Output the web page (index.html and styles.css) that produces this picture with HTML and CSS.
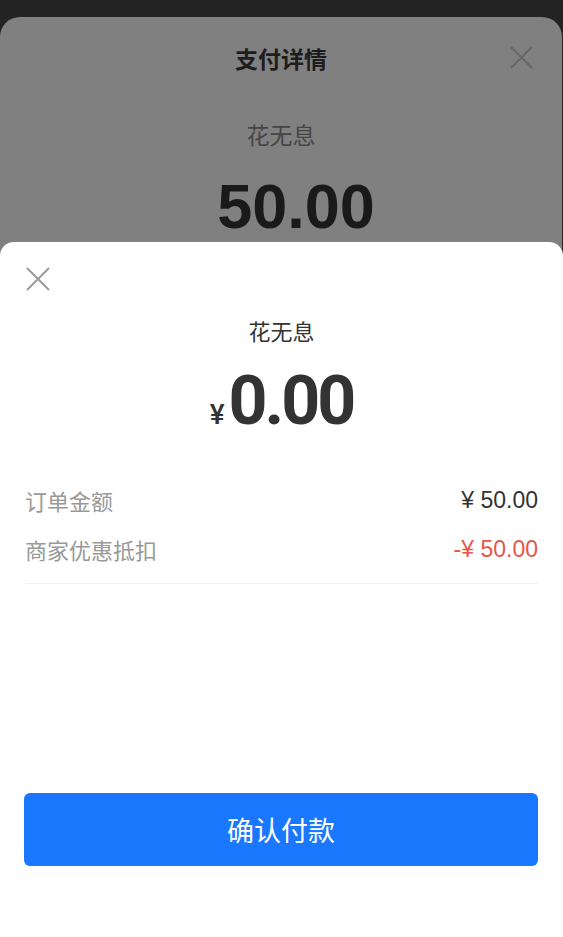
FILE: index.html
```html
<!DOCTYPE html>
<html lang="zh-CN">
<head>
<meta charset="utf-8">
<title>支付详情</title>
<link rel="stylesheet" href="styles.css">
</head>
<body>
<div class="screen">
  <div class="back-card">
    <div class="back-header">
      <div class="back-title">支付详情</div>
      <svg class="back-close" viewBox="0 0 24 24" width="24" height="24"><path d="M1 1L23 23M23 1L1 23" stroke="#676767" stroke-width="2" fill="none"/></svg>
    </div>
    <div class="back-sub">花无息</div>
    <div class="back-amount">50.00</div>
  </div>

  <div class="sheet">
    <div class="sheet-top">
      <svg class="sheet-close" viewBox="0 0 24 24" width="24" height="24"><path d="M1 1L23 23M23 1L1 23" stroke="#9a9a9a" stroke-width="2" fill="none"/></svg>
    </div>
    <div class="sheet-sub">花无息</div>
    <div class="sheet-amount"><span class="yen">¥</span><span class="num">0.00</span></div>

    <div class="rows">
      <div class="row"><span class="label">订单金额</span><span class="value">¥ 50.00</span></div>
      <div class="row"><span class="label">商家优惠抵扣</span><span class="value discount">-¥ 50.00</span></div>
    </div>
    <div class="divider"></div>

    <button class="confirm">确认付款</button>
  </div>
</div>
</body>
</html>
```

FILE: styles.css
```css
* { box-sizing: border-box; }
html, body { margin: 0; padding: 0; }
body {
  background: #232323;
  font-family: "Noto Sans CJK SC", "Liberation Sans", sans-serif;
}
.screen {
  position: relative;
  width: 563px;
  height: 937px;
  overflow: hidden;
  padding-top: 17px;
}
.back-card {
  width: 562px;
  height: 940px;
  background: #808080;
  border-radius: 20px 20px 0 0;
  text-align: center;
}
.back-header {
  position: relative;
  padding-top: 26px;
  height: 56px;
}
.back-title {
  font-size: 23px;
  line-height: 30px;
  font-weight: 700;
  color: #1d1d1d;
}
.back-close {
  position: absolute;
  right: 29px;
  top: 29px;
  width: 23px;
  height: 23px;
}
.back-sub {
  margin-top: 46px;
  font-size: 23px;
  line-height: 30px;
  color: #454545;
}
.back-amount {
  margin-top: 22px;
  padding-left: 30px;
  font-family: "Liberation Sans", sans-serif;
  font-weight: 700;
  font-size: 63px;
  line-height: 70px;
  color: #1a1a1a;
}
.sheet {
  position: absolute;
  left: 0;
  right: 0;
  top: 242px;
  bottom: 0;
  background: #fff;
  border-radius: 14px 14px 0 0;
  display: flex;
  flex-direction: column;
}
.sheet-top {
  padding: 25px 0 0 26px;
  height: 49px;
}
.sheet-close {
  display: block;
  width: 24px;
  height: 24px;
}
.sheet-sub {
  margin-top: 24px;
  text-align: center;
  font-size: 22px;
  line-height: 30px;
  color: #333;
}
.sheet-amount {
  margin-top: 16px;
  text-align: center;
  line-height: 80px;
  height: 80px;
  color: #333;
  font-family: "Roboto", "Liberation Sans", sans-serif;
}
.yen {
  font-size: 28px;
  font-weight: 500;
  margin-right: 4px;
}
.num {
  font-size: 68px;
  font-weight: 700;
  letter-spacing: -3px;
}
.rows {
  margin-top: 44px;
  padding: 0 25px;
  display: flex;
  flex-direction: column;
  gap: 19px;
}
.row {
  display: flex;
  justify-content: space-between;
  align-items: center;
  height: 30px;
  font-size: 22px;
  line-height: 30px;
}
.label { color: #999; }
.value {
  color: #333;
  font-family: "Liberation Sans", "Noto Sans CJK SC", sans-serif;
  font-size: 23px;
}
.discount { color: #e8564a; }
.divider {
  margin: 19px 25px 0;
  height: 1px;
  background: #f1f1f1;
}
.confirm {
  margin: auto 25px 71px 24px;
  height: 73px;
  border: none;
  border-radius: 6px;
  background: #1a77ff;
  color: #fff;
  font-family: "Noto Sans CJK SC", sans-serif;
  font-size: 27px;
  padding: 0;
}
```
